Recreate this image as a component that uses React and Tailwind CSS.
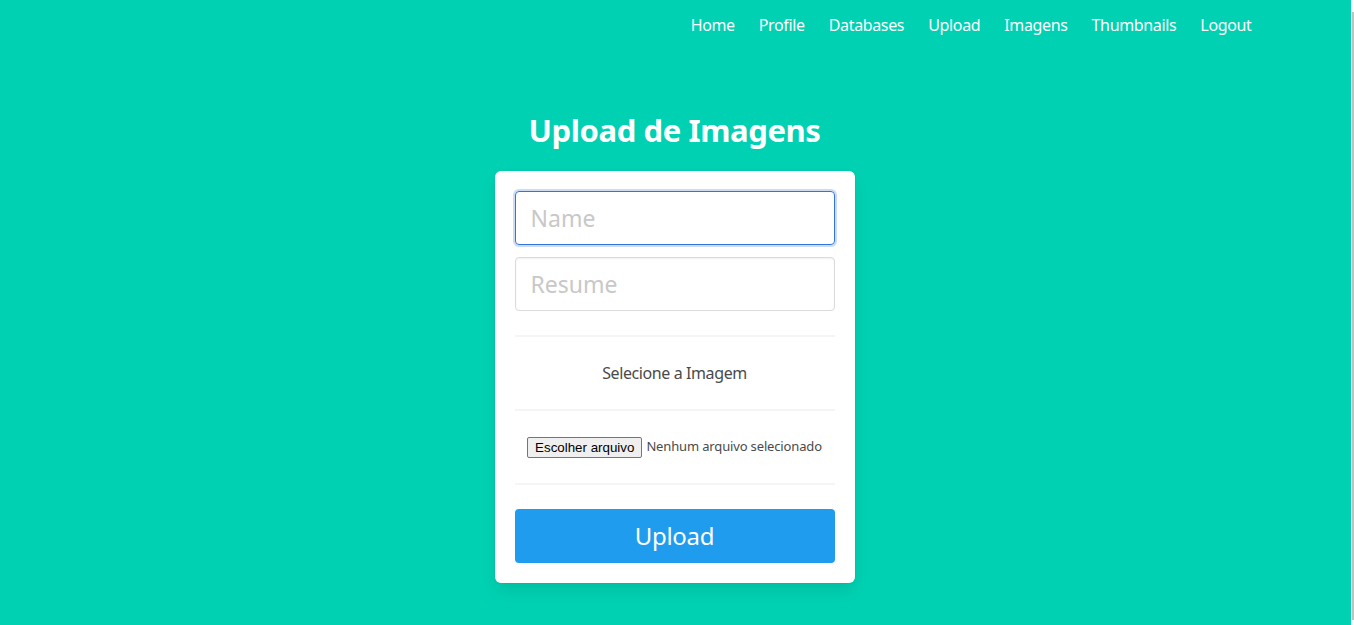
const links = ['Home', 'Profile', 'Databases', 'Upload', 'Imagens', 'Thumbnails', 'Logout'];

const font = { fontFamily: '"Noto Sans", "Open Sans", sans-serif' };

export default function App() {
  return (
    <div className="flex min-h-screen bg-[#00d1b2] text-[#4a4a4a]" style={font}>
      <div className="flex-1 flex flex-col">
        {/* Navbar */}
        <nav className="h-[52px] w-[1152px] mx-auto flex justify-end items-center">
          <div className="flex items-center mr-[-12px] mt-[-2px]">
            {links.map((l) => (
              <a key={l} href="#" className="px-3 py-2 text-white text-[16px] leading-6 tracking-[-0.35px]">
                {l}
              </a>
            ))}
          </div>
        </nav>

        {/* Conteúdo */}
        <div className="flex flex-col items-center pt-[60px] pr-[2px]">
          <h1 className="text-white font-bold text-[31px] leading-[36px] tracking-[-0.4px] mb-[23px]">Upload de Imagens</h1>

          <div className="w-[360px] bg-white rounded-[6px] p-5 shadow-[0_8px_16px_-2px_rgba(10,10,10,0.1),0_0_0_1px_rgba(10,10,10,0.02)]">
            <input
              placeholder="Name"
              className="block w-full h-[54px] px-[15px] text-[23px] rounded-[4px] border border-[#3273dc] shadow-[0_0_0_2px_rgba(50,115,220,0.25)] outline-none placeholder:text-[#c8c8c8]"
            />
            <input
              placeholder="Resume"
              className="block w-full h-[54px] mt-3 px-[15px] text-[23px] rounded-[4px] border border-[#dbdbdb] shadow-[inset_0_1px_2px_rgba(10,10,10,0.06)] outline-none placeholder:text-[#c8c8c8]"
            />

            <hr className="h-[2px] bg-[#f5f5f5] border-0 my-6" />
            <p className="text-center text-[16px] leading-6 tracking-[-0.4px]">Selecione a Imagem</p>
            <hr className="h-[2px] bg-[#f5f5f5] border-0 my-6" />

            <div className="flex justify-center items-center h-6 mt-[1px] text-[13px]">
              <span
                className="px-[7px] h-[21px] leading-[19px] border border-[#767676] rounded-[2px] bg-[#efefef] text-black text-[13.33px]"
                style={{ fontFamily: '"Liberation Sans", Arial, sans-serif' }}
              >
                Escolher arquivo
              </span>
              <span className="ml-1 text-[#4a4a4a] tracking-[-0.15px]">Nenhum arquivo selecionado</span>
            </div>

            <hr className="h-[2px] bg-[#f5f5f5] border-0 mt-6 mb-6" />

            <button className="w-full h-[54px] rounded-[4px] bg-[#209cee] text-white text-[24px] tracking-[-0.3px]">
              Upload
            </button>
          </div>
        </div>
      </div>

      {/* barra de rolagem */}
      <div className="w-[3px] bg-white flex flex-col">
        <div className="ml-[1px] mt-3 mb-[5px] flex-1 bg-[#c1c1c1]" />
      </div>
    </div>
  );
}
